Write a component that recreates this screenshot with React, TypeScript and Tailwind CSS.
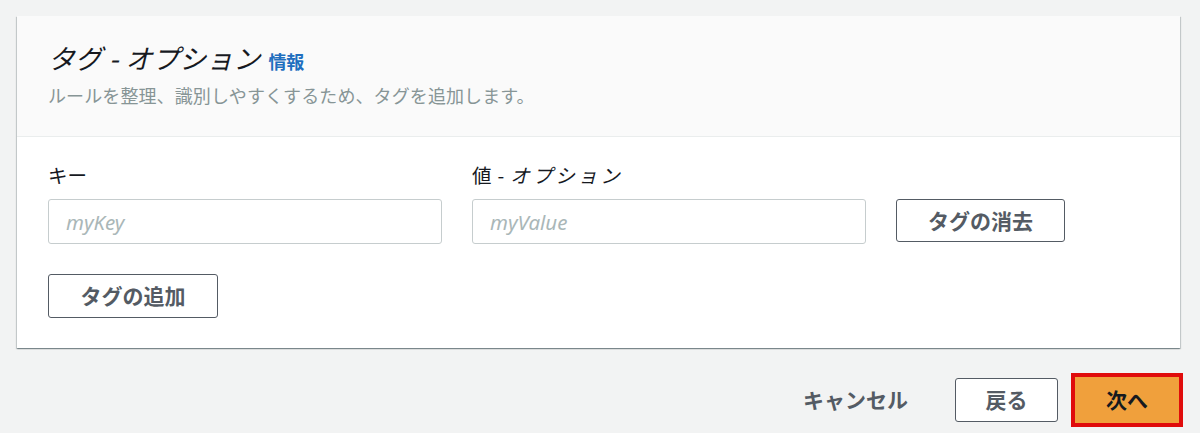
import React from "react";

const jp = "font-['Noto_Sans_CJK_JP','Noto_Sans',sans-serif]";

const OutlineButton = ({ label, className = "" }: { label: string; className?: string }) => (
  <button
    type="button"
    className={`flex items-center justify-center rounded-[3px] border border-[#545b64] bg-white text-[21px] font-bold text-[#545b64] ${className}`}
  >
    {label}
  </button>
);

const TextField = ({ placeholder }: { placeholder: string }) => (
  <input
    type="text"
    placeholder={placeholder}
    className="h-[45px] w-[394px] rounded-[3px] border border-[#c6cdce] bg-white px-[17px] font-['Noto_Sans',sans-serif] text-[20.5px] italic text-[#16191f] outline-none placeholder:text-[#aab7b8]"
  />
);

export default function App() {
  return (
    <div className={`h-[433px] w-[1200px] overflow-hidden bg-[#f2f3f3] pl-[17px] pt-[16px] ${jp}`}>
      <section className="w-[1163px] bg-white shadow-[0_1px_1px_rgba(0,28,36,0.3),1px_1px_1px_rgba(0,28,36,0.15),-1px_1px_1px_rgba(0,28,36,0.15)]">
        <header className="h-[121px] border-b border-[#eaeded] bg-[#fafafa] px-[31px] pt-[25px]">
          <h2 className="flex items-baseline gap-[8px] leading-[34px] text-[#16191f]">
            <span className="text-[27px] font-normal italic">
              タグ<span className="mx-[7px]">-</span>オプション
            </span>
            <span className="text-[18px] font-bold text-[#1f6fbf]">情報</span>
          </h2>
          <p className="mt-[4px] text-[18px] leading-[26px] tracking-[0.1px] text-[#879596]">
            ルールを整理、識別しやすくするため、タグを追加します。
          </p>
        </header>

        <div className="h-[211px] px-[31px] pt-[24px]">
          <div className="flex items-end gap-[30px]">
            <label className="flex flex-col gap-[10px]">
              <span className="text-[19.5px] leading-[28px] text-[#16191f]">キー</span>
              <TextField placeholder="myKey" />
            </label>
            <label className="flex flex-col gap-[10px]">
              <span className="text-[19.5px] leading-[28px] text-[#16191f]">
                値<span className="mx-[6px]">-</span>
                <span className="italic tracking-[3px]">オプション</span>
              </span>
              <TextField placeholder="myValue" />
            </label>
            <OutlineButton label="タグの消去" className="mb-[2px] h-[43px] w-[169px]" />
          </div>
          <OutlineButton label="タグの追加" className="mt-[30px] h-[44px] w-[170px]" />
        </div>
      </section>

      <footer className="mt-[25px] flex w-[1166px] items-center justify-end">
        <button type="button" className="mr-[47px] text-[21px] font-bold text-[#545b64]">
          キャンセル
        </button>
        <OutlineButton label="戻る" className="mr-[13px] h-[44px] w-[103px]" />
        <div className="border-4 border-[#e00b0b]">
          <button
            type="button"
            className="flex h-[46px] w-[104px] items-center justify-center bg-[#f0a03c] text-[21px] font-bold text-[#16191f]"
          >
            次へ
          </button>
        </div>
      </footer>
    </div>
  );
}
